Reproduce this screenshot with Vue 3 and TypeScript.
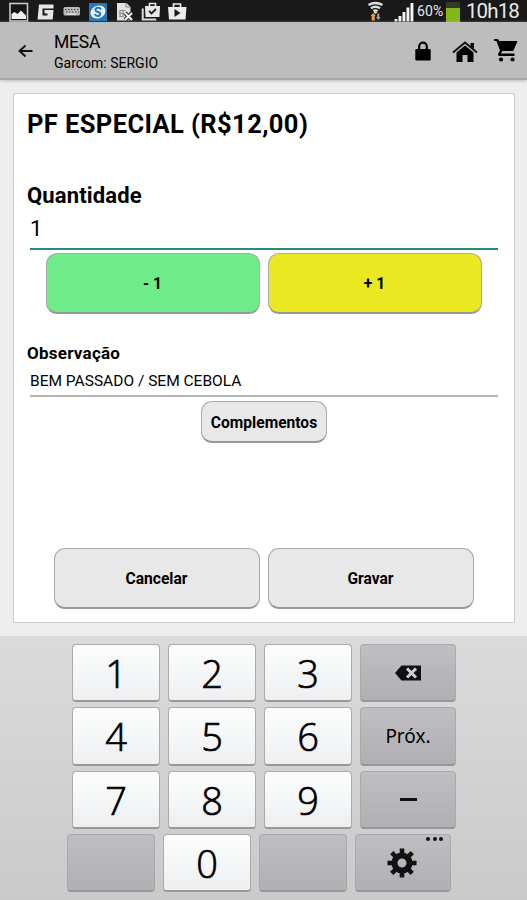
<script setup lang="ts">
import { ref } from 'vue'

interface Key {
  label: string
  kind: 'digit' | 'next' | 'minus' | 'erase' | 'blank' | 'settings'
}

const quantity = ref(1)
const note = ref('BEM PASSADO / SEM CEBOLA')

const digit = (label: string): Key => ({ label, kind: 'digit' })

const rows: Key[][] = [
  [digit('1'), digit('2'), digit('3'), { label: '', kind: 'erase' }],
  [digit('4'), digit('5'), digit('6'), { label: 'Próx.', kind: 'next' }],
  [digit('7'), digit('8'), digit('9'), { label: '', kind: 'minus' }],
  [{ label: '', kind: 'blank' }, digit('0'), { label: '', kind: 'blank' }, { label: '', kind: 'settings' }],
]

const teeth = [0, 45, 90, 135, 180, 225, 270, 315]

function change(step: number) {
  quantity.value = Math.max(0, quantity.value + step)
}
</script>

<template>
  <div class="screen">
    <header class="status">
      <svg class="status-icons" width="190" height="22" viewBox="0 0 190 22">
        <rect x="10" y="3.500" width="17.500" height="17.500" fill="#151515" stroke="#c8c8c8" stroke-width="1.600" />
        <path d="M11.500 19v-5l3-2 3 2 3.500-3.500 5 5V19z" fill="#eee" />
        <path d="M39 4.500h14.500v4H42.500v7h5v-2h-3V10h9l-.8 9.500H37.500z" fill="#e6e6e6" />
        <rect x="63.500" y="7" width="16.500" height="8.500" rx="1.500" fill="#b9b9b9" />
        <g stroke="#3a3a3a" fill="none">
          <path d="M65 9.500h14M66 12h13" stroke-dasharray="1.300 1.700" />
          <path d="M67 14h9" stroke="#eee" />
        </g>
        <rect x="89" y="3" width="18" height="18" fill="#2675bd" />
        <ellipse cx="98" cy="12" rx="7.800" ry="6.300" fill="#e9f3fb" transform="rotate(-25 98 12)" />
        <path d="M101 9.500q-1-2-3.300-1.700t-2.300 2.200q.3 1.500 2.600 2t2.300 2q-.3 2-2.500 2t-3.100-1.800" fill="none" stroke="#2675bd" stroke-width="1.900" />
        <path d="M117 3h9.500l4 4v13.500H117z" fill="#e2e2e2" />
        <path d="M126 3v4h4" fill="none" stroke="#888" />
        <path d="M119.500 10.500h6M119.500 13.500h5M119.500 16.500h4M120 10v7M123 10v7" stroke="#888" />
        <path d="M125 13l7 7M132 13l-7 7" stroke="#222" stroke-width="4" />
        <path d="M125 13l7 7M132 13l-7 7" stroke="#f5f5f5" stroke-width="2.100" />
        <path d="M142.700 8.500v11h13.500" fill="none" stroke="#ddd" stroke-width="2" />
        <path d="M145 6h15l-.5 11h-14z" fill="#e8e8e8" />
        <path d="M149.500 6V3.500h6V6" fill="none" stroke="#e8e8e8" stroke-width="1.600" />
        <path d="M149 11l2.500 2.500 4.500-4.500" fill="none" stroke="#222" stroke-width="1.900" />
        <path d="M168 7h18.500l-1 12.500h-16.500z" fill="#ececec" />
        <path d="M173.500 7V4h7v3" fill="none" stroke="#ececec" stroke-width="1.700" />
        <path d="M174.500 9l6 4-6 4z" fill="#1b1b1b" />
      </svg>
      <div class="status-right">
        <svg class="signals" width="50" height="22" viewBox="0 0 50 22">
          <g fill="none" stroke="#dedede" stroke-width="2.400">
            <path d="M1.500 5q7-4 14 0" />
            <path d="M4 8.300q4.500-3 9 0" />
            <path d="M6.500 11.300q2-1.500 4 0" />
          </g>
          <path d="M6.500 12h4l-2 2z" fill="#dedede" />
          <path d="M3.500 16l2.700-3 2.700 3H7.700v4.500h-3V16z" fill="#eaa232" />
          <path d="M9 17h1.300v-3.500h1.900V17h1.300l-2.200 3z" fill="#aaa" />
          <g fill="#f5f5f5">
            <rect x="27.500" y="19" width="2.900" height="2.500" />
            <rect x="31.500" y="16" width="2.900" height="5.500" />
            <rect x="35.500" y="12" width="2.900" height="9.500" />
            <rect x="39.500" y="7.500" width="2.900" height="14" />
            <rect x="43.500" y="3" width="2.900" height="18.500" />
          </g>
        </svg>
        <span class="percent">60%</span>
        <span class="battery"></span>
        <span class="clock">10h18</span>
      </div>
    </header>

    <nav class="bar">
      <svg class="back" width="16" height="14" viewBox="0 0 16 14" fill="none" stroke="#111" stroke-width="1.900">
        <path d="M14.500 7H1.500M7.500 1.500L1.500 7l6 5.500" />
      </svg>
      <div class="titles">
        <div class="title">MESA</div>
        <div class="subtitle">Garcom: SERGIO</div>
      </div>
      <div class="actions">
        <svg width="16" height="20" viewBox="0 0 16 20">
          <path d="M4.200 9V5.500a3.800 3.800 0 0 1 7.600 0V9" fill="none" stroke="#000" stroke-width="2.200" />
          <rect x=".3" y="8" width="15.400" height="11.500" rx="1.300" />
        </svg>
        <svg class="home" width="26" height="22" viewBox="0 0 26 22">
          <path d="M1 11.500L13 1.500l12 10" fill="none" stroke="#111" stroke-width="1.900" />
          <path d="M18.500 2h3.500v6l-3.500-3z" />
          <path d="M4.500 11.500L13 4.500l8.500 7V21H15.500v-7h-5v7h-6z" />
        </svg>
        <svg class="cart" width="24" height="24" viewBox="0 0 24 24">
          <path d="M0 0h4l1.200 2H23.500l-4.200 10H8.200L7 14.500h13.500V17H5q-1.800-.8-.5-3l1.500-2.500L2.500 2H0z" />
          <circle cx="7" cy="20.500" r="2.100" /><circle cx="18.500" cy="20.500" r="2.100" />
        </svg>
      </div>
    </nav>

    <main class="content">
      <section class="card">
        <h1>PF ESPECIAL (R$12,00)</h1>
        <h2>Quantidade</h2>
        <div class="quantity">{{ quantity }}</div>
        <div class="pair steps">
          <button class="minus" @click="change(-1)">- 1</button>
          <button class="plus" @click="change(1)">+ 1</button>
        </div>
        <h3>Observação</h3>
        <div class="note">{{ note }}</div>
        <button class="extras">Complementos</button>
        <div class="pair choices">
          <button>Cancelar</button>
          <button>Gravar</button>
        </div>
      </section>
    </main>

    <footer class="keyboard">
      <div v-for="(row, i) in rows" :key="i" class="row" :class="{ last: i === 3 }">
        <div v-for="(key, j) in row" :key="j" class="key" :class="[key.kind, { wide: j === 3 }]">
          <svg v-if="key.kind === 'erase'" width="26" height="16" viewBox="0 0 26 16">
            <path d="M0 8l6.500-7.500H26v15H6.500z" fill="#111" />
            <path d="M12 3.500l9 9M21 3.500l-9 9" stroke="#d0d0d4" stroke-width="3" />
          </svg>
          <svg v-else-if="key.kind === 'settings'" width="30" height="30" viewBox="-15 -15 30 30">
            <rect v-for="angle in teeth" :key="angle" x="-2.300" y="-14.500" width="4.600" height="7" :transform="`rotate(${angle})`" fill="#111" />
            <circle r="7.500" fill="none" stroke="#111" stroke-width="6" />
          </svg>
          <span v-else-if="key.kind === 'minus'" class="dash"></span>
          <span v-else>{{ key.label }}</span>
          <span v-if="key.kind === 'settings'" class="dots"><i></i><i></i><i></i></span>
        </div>
      </div>
    </footer>
  </div>
</template>

<style>
body {
  margin: 0;
}
</style>

<style scoped>
.screen {
  width: 527px;
  height: 900px;
  display: flex;
  flex-direction: column;
  overflow: hidden;
  background: #eee;
  color: #000;
  font-family: Roboto, "Liberation Sans", sans-serif;
}
.screen * {
  box-sizing: border-box;
}
svg {
  display: block;
  flex: none;
}
.status {
  height: 22px;
  flex: none;
  display: flex;
  justify-content: space-between;
  background: #191919;
}
.status-right {
  display: flex;
  align-items: center;
  color: #e9e9e9;
  padding-right: 8px;
}
.percent {
  width: 29px;
  font-size: 14px;
  letter-spacing: 0.100px;
  white-space: nowrap;
}
.battery {
  width: 14px;
  height: 20px;
  margin: 2px 6px 0 0;
  background: linear-gradient(#343b2c 0 6px, #80b916 6px);
}
.clock {
  width: 53px;
  font-size: 20.500px;
  letter-spacing: -0.900px;
  line-height: 22px;
  white-space: nowrap;
}
.bar {
  height: 58px;
  flex: none;
  display: flex;
  align-items: center;
  padding: 2px 9px 0 18px;
  background: #bdbdbd;
  border-bottom: 2px solid #a9a9a9;
  box-shadow: 0 1px 3px #bbb;
}
.titles {
  margin-left: 20px;
  flex: 1;
  padding-top: 4px;
}
.title {
  font-size: 17.500px;
  letter-spacing: -0.200px;
  line-height: 21px;
}
.subtitle {
  font-size: 14px;
  line-height: 21px;
}
.actions {
  display: flex;
  align-items: center;
}
.actions > :first-child {
  margin-right: 1px;
}
.home {
  margin: 2px 16px 0 20px;
}
.content {
  height: 556px;
  flex: none;
  padding: 13px 12px 13px 13px;
}
.card {
  height: 530px;
  display: flex;
  flex-direction: column;
  padding: 0 16px 13px 13px;
  background: #fff;
  border: 1px solid #ccc;
}
h1, h2, h3 {
  margin: 0;
  font-weight: 700;
  white-space: nowrap;
}
h1 {
  margin-top: 14px;
  font-size: 25.500px;
  letter-spacing: 0.400px;
  line-height: 32px;
}
h2 {
  margin-top: 42px;
  font-size: 22px;
  letter-spacing: 0.150px;
  line-height: 28px;
}
.quantity {
  height: 40px;
  margin-left: 3px;
  border-bottom: 2px solid #278b7c;
  font-size: 22px;
  line-height: 38px;
}
.pair {
  display: flex;
  justify-content: center;
  gap: 8px;
  padding-left: 2px;
}
button {
  padding: 2px 0 0;
  border: 1px solid #aaa;
  border-bottom: 2px solid #999;
  border-radius: 11px;
  background: #e8e8e8;
  color: #000;
  font: 700 15.600px Roboto, "Liberation Sans", sans-serif;
}
.pair button {
  height: 61px;
}
.steps {
  margin-top: 3px;
}
.steps button {
  width: 214px;
}
.steps .minus {
  background: #6fec8a;
}
.steps .plus {
  background: #e9e821;
}
h3 {
  margin-top: 27px;
  font-size: 17px;
  letter-spacing: 0.250px;
  line-height: 24px;
}
.note {
  height: 32px;
  margin-left: 3px;
  border-bottom: 2px solid #b6b6b6;
  font-size: 15.500px;
  line-height: 33px;
}
.extras {
  width: 126px;
  height: 42px;
  margin: 4px 0 0 174px;
}
.choices {
  margin-top: auto;
}
.choices button {
  width: 206px;
}
.keyboard {
  flex: 1;
  display: flex;
  flex-direction: column;
  gap: 5px;
  padding-top: 8px;
  background: linear-gradient(#dbdbdb, #cacaca);
}
.row {
  display: flex;
  gap: 8px;
  padding-left: 72px;
}
.row.last {
  padding-left: 67px;
}
.key {
  position: relative;
  width: 88px;
  height: 58.300px;
  display: flex;
  align-items: center;
  justify-content: center;
  border: 1px solid #aaaaac;
  border-bottom: 2px solid #98989a;
  border-radius: 4px;
  background: linear-gradient(#bfbfc3, #afafb4);
}
.key.wide {
  width: 96px;
}
.key.digit {
  background: linear-gradient(#fcfdfd, #eeeff1);
  padding-top: 1px;
  font: 300 38px "Open Sans", "Noto Sans", sans-serif;
  -webkit-text-stroke: 0.700px #000;
}
.key.settings {
  padding-right: 3px;
}
.next {
  font: 19px "Noto Sans", sans-serif;
}
.dash {
  width: 17px;
  height: 3px;
  background: #111;
}
.dots {
  position: absolute;
  top: 2px;
  right: 7px;
  display: flex;
  gap: 2.500px;
}
.dots i {
  width: 4px;
  height: 4px;
  border-radius: 50%;
  background: #111;
}
</style>
